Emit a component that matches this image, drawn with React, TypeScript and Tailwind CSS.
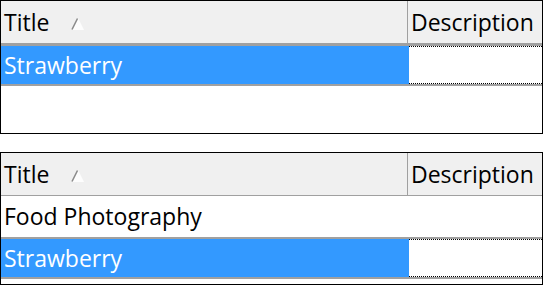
import React from 'react';

const SortArrow = () => (
  <svg width="13" height="13" viewBox="0 0 13 13" className="ml-[22px] mt-[4px]">
    <polygon points="7,0 13,12 1,12" fill="#fdfdfd" />
    <line x1="6.5" y1="0.5" x2="1" y2="11.5" stroke="#8a8a8a" strokeWidth="1.6" />
  </svg>
);

const Header = () => (
  <div className="flex h-[43px] bg-[#f0f0f0] border-b border-[#a0a0a0]">
    <div className="w-[407px] flex items-center pl-[3px] border-r border-[#a0a0a0]">
      <span>Title</span>
      <SortArrow />
    </div>
    <div className="flex-1 flex items-center pl-[3px]">Description</div>
  </div>
);

const SelectedRow = () => (
  <div className="flex h-[42px] border-y-2 border-[#a0a0a0]">
    <div className="w-[408px] bg-[#3399ff] text-white flex items-center pl-[3px]">Strawberry</div>
    <div className="flex-1 border-y border-dotted border-black bg-white" />
  </div>
);

export default function App() {
  return (
    <div
      className="w-[543px] h-[286px] bg-white text-[23px] text-black leading-none"
      style={{ fontFamily: '"Open Sans", "Noto Sans", sans-serif' }}
    >
      <div className="h-[134px] border border-black flex flex-col">
        <Header />
        <SelectedRow />
      </div>
      <div className="h-[18px]" />
      <div className="h-[133px] border border-black flex flex-col">
        <Header />
        <div className="h-[41px] flex items-center pl-[3px]">Food Photography</div>
        <SelectedRow />
      </div>
    </div>
  );
}
